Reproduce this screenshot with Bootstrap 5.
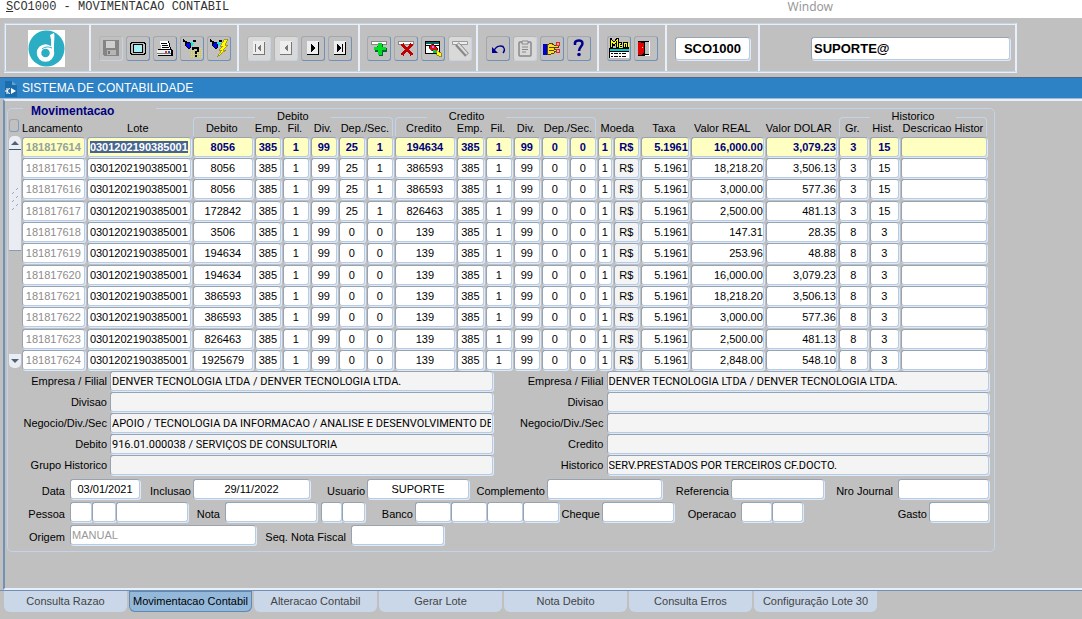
<!DOCTYPE html>
<html lang="pt-BR">
<head>
<meta charset="utf-8">
<meta name="viewport" content="width=device-width, initial-scale=1">
<title>SCO1000 - Movimentacao Contabil</title>
<link href="https://cdn.jsdelivr.net/npm/bootstrap@5.3.0/dist/css/bootstrap.min.css" rel="stylesheet">
<style>
  :root { --line: #c3d3e8; --hi: #e6effa; --navy: #000080; }
  body { background: #c0c0c0; color: #000; font: 11px/13px "Liberation Sans", Arial, sans-serif; }
  .menubar { height: 18px; background: #fff; }
  .menubar a { color: #333; text-decoration: none; }
  .menu-prog { font: 12px/14px "Liberation Mono", monospace; padding-left: 6px; }
  .menubar .menu-window { color: #999; font: 12px/14px "Noto Sans", sans-serif; margin-right: 249px; }

  .toolbar { margin: 5px 65px 0 4px; height: 49px; border: 1px solid var(--line); border-right: 2px solid var(--hi); box-shadow: inset 1px 1px 0 var(--hi), 0 1px 0 var(--hi); }
  .tool-seg { border-right: 2px solid var(--hi); display: flex; align-items: center; gap: 3px; padding-left: 8px; flex: none; padding-top: 1px; }
  .seg-logo { width: 86px; padding-left: 23px; }
  .seg-file { width: 148px; }
  .seg-nav { width: 121px; }
  .seg-rec { width: 118px; padding-left: 7px; }
  .seg-edit { width: 121px; }
  .seg-menu { width: 68px; }
  .seg-code { width: 93px; }
  .seg-user { flex: 1; border-right: 0; padding: 1px 5px 0 51px; }
  .tool-btn { width: 24px; height: 25px; padding: 0; border-radius: 3px; background: #c0c0c0; border: 1px solid #a4a8ae; border-right-color: #6f90b8; border-bottom-color: #6f90b8; display: grid; place-items: center; }
  .tool-btn:disabled { background: #d9d9d9; border-color: #b5b5b5 #c6d3e4 #c6d3e4 #b5b5b5; }
  .tool-btn.flat:disabled { background: #c0c0c0; }
  .tool-btn svg { width: 20px; height: 20px; }

  .titlebar { height: 22px; margin-top: 5px; background: #2c82c4; border-top: 1px solid #50658a; border-bottom: 1px solid #9db9d6; color: #fff; font-size: 12px; padding: 1px 0 0 4px; }
  .canvas { margin-left: 3px; border-left: 2px solid #7090b4; border-top: 2px solid var(--hi); border-bottom: 2px solid var(--hi); padding: 7px 87px 36px 2px; min-height: 490px; }
  .mov { border: 1px solid var(--line); border-radius: 5px; padding: 0 5px 6px 1px; position: relative; }
  .mov-title { position: absolute; top: -4px; left: 15px; padding: 0 42px 0 8px; background: #c0c0c0; color: var(--navy); font-weight: bold; font-size: 12px; }

  .field { width: 100%; min-width: 0; height: 20px; padding: 0 1px; background: #fff; color: #000; border: 1px solid #b7cbe4; border-top-color: #98a3b2; border-left-color: #98a3b2; border-radius: 3px; box-shadow: 1px 1px 0 #dfeaf7; font: inherit; display: block; outline: 0; }
  .field.ro { background: #f4f4f4; }
  .detail .field { font-family: Roboto, sans-serif; }
  .field.big { height: 23px; padding: 0 2px; font-size: 13px; font-weight: bold; }
  .field.faded { color: #999; }

  .rail { width: 13px; padding-top: 10px; }
  .rail-box { width: 10px; height: 13px; border: 1px solid #a0a4aa; border-right-color: #7f9dc2; border-bottom-color: #7f9dc2; border-radius: 3px; }
  .rail-btn { width: 12px; height: 14px; border: 0; padding: 0; background: #e9eef5; display: grid; place-items: center; }
  .rail-up { border-radius: 5px 5px 0 0; border-bottom: 1px solid #44546a; margin-top: 4px; }
  .rail-down { border-radius: 0 0 5px 5px; margin-bottom: 3px; }
  .rail-thumb { height: 101px; width: 12px; background: #e9edf3; border-bottom: 1px solid #8a9bb2; display: grid; place-items: center; }

  .mov-grid { table-layout: fixed; width: 100%; border-collapse: collapse; margin-top: 1px; }
  .mov-grid th, .mov-grid td { padding: 0; font-weight: normal; text-align: center; white-space: nowrap; }
  .mov-grid td { padding: 0 2px 0 0; vertical-align: top; }
  .mov-grid tbody tr { height: 21px; }
  .mov-grid tbody tr:nth-child(3n) { height: 22px; }
  .mov-grid .row-groups { height: 13px; }
  .mov-grid .row-names { height: 14px; }
  .mov-grid .row-names th { padding: 0 4px 3px 0; line-height: 11px; vertical-align: top; }
  .mov-grid .row-names th.amount { padding-right: 12px; }
  .group-head { display: flex; height: 13px; gap: 22px; margin-right: 2px; align-items: flex-start; }
  .group-head::before, .group-head::after { content: ""; flex: 1; height: 19px; margin-top: 7px; border-top: 1px solid var(--line); }
  .group-head::before { border-left: 1px solid var(--line); border-top-left-radius: 4px; }
  .group-head::after { border-right: 1px solid var(--line); border-top-right-radius: 4px; }
  .group-head.lead-in::before { flex: 0 0 32px; }
  .c-lanc { width: 65px } .c-lote { width: 106px } .c-conta { width: 62px } .c-cod { width: 28px } .c-emp { width: 29px }
  .c-moe { width: 16px } .c-sim { width: 27px } .c-taxa { width: 50px } .c-real { width: 75px } .c-dol { width: 73px } .c-hist { width: 31px }
  .mov-grid .field { text-align: center; padding: 0; }
  .mov-grid .num { text-align: right; }
  .mov-grid .dim { color: #8c8c8c; }
  .mov-grid .current .field { background: #ffffc2; color: var(--navy); font-weight: bold; }
  .mov-grid .current .dim { color: #93a39b; }
  .field::selection { background: #47648f; color: #fff; }

  .detail { display: grid; grid-template-columns: 101px 1fr 114px 1fr; grid-auto-rows: 20px; row-gap: 1px; }
  .detail label, .line label { text-align: right; padding: 4px 3px 0 0; white-space: nowrap; }
  .line { display: grid; margin-top: 3px; }
  .line label { padding: 6px 2px 0 0; }
  .line label.wide { padding-right: 5px; }
  .line-a { grid-template-columns: 61px 70px 53px 117px 57px 102px 78px 115px 69px 93px 74px 1fr; margin-top: 4px; }
  .line-b { grid-template-columns: 61px 22px 24px 72px 37px 96px 21px 23px 50px 36px 36px 36px 36px 43px 72px 67px 31px 31px 1fr 60px; }
  .line-c { grid-template-columns: 61px 186px 95px 93px; }

  .pages { border-top: 1px solid #6f8fb3; gap: 2px; padding-left: 4px; flex-wrap: nowrap; }
  .pages .nav-link { width: 123px; height: 21px; padding: 4px 0 0; text-align: center; font-size: 11px; line-height: 13px; color: #444; background: #c9d7e9; border-radius: 0 0 6px 6px; white-space: nowrap; }
  .pages .nav-link.active { background: #93b8da; color: #000; box-shadow: inset 0 0 0 1px #5f88b5; }
</style>
</head>
<body>
<nav class="menubar d-flex justify-content-between" aria-label="Menu">
  <a class="menu-prog" href="#"><u>S</u>CO1000 - MOVIMENTACAO CONTABIL</a>
  <a class="menu-window" href="#">Window</a>
</nav>

<div class="toolbar d-flex" role="toolbar" aria-label="Ferramentas">
  <div class="tool-seg seg-logo">
    <svg width="37" height="37" viewBox="0 0 37 37" role="img" aria-label="Logo"><path fill="#fff" d="M0 0h37v37H0z"/><circle cx="18.500" cy="18.500" r="18" fill="#2badc4"/><path d="M22 5l4-2c1 3 0 7 0 12v8h-4c1-6 2-12 0-18z" fill="#fff"/><circle cx="17.500" cy="23" r="6.500" fill="none" stroke="#fff" stroke-width="4.500"/><path d="M14 19c4-3 7-2 10-1" fill="none" stroke="#2badc4" stroke-width="1"/></svg>
  </div>
  <div class="tool-seg seg-file">
    <button class="tool-btn flat" disabled aria-label="Salvar"><svg viewBox="0 0 20 20" shape-rendering="crispEdges"><path fill="#858585" d="M2 2h15l1 1v15H3l-1-1z"/><path fill="#cfcfcf" d="M5 3h9v7H5z"/><path fill="#b5b5b5" d="M6 12h9v5H6z"/><path fill="#777" d="M7 13h2v3H7z"/></svg></button>
    <button class="tool-btn" aria-label="Tela"><svg viewBox="0 0 20 20" shape-rendering="crispEdges"><path fill="#000" d="M3 4h14v1h1v11h-1v1H3v-1H2V5h1z"/><path fill="#c0c0c0" d="M4 5h12v1h1v9h-1v1H4v-1H3V6h1z"/><path fill="#000" d="M5 6h10v9H5z"/><path fill="#a6eef2" d="M6 7h8v7H6z"/></svg></button>
    <button class="tool-btn" aria-label="Imprimir"><svg viewBox="0 0 20 20" shape-rendering="crispEdges"><path fill="#fff" d="M5 3h8l2 8H6z"/><path d="M6 5h6M7 7h6M7 9h7" stroke="#000"/><path fill="#000" d="M13 3h1l2 8h-1zM3 11h14l1 2v5H3z"/><path fill="#eee" d="M2 12h14v5H2z"/><path fill="#d33" d="M10 13h2v2h-2z"/><path fill="#25c" d="M13 13h2v2h-2z"/><path d="M2 15.500h14" stroke="#777"/></svg></button>
    <button class="tool-btn" aria-label="Entrar consulta"><svg viewBox="0 0 20 20" shape-rendering="crispEdges"><path fill="#00f" stroke="#000" d="M4 5l4-1 1 5-2 2-4-4z"/><path fill="#0ee" d="M8 4l4 1-2 4z"/><path d="M1 2l4 3M11 3h3" stroke="#000" stroke-width="2"/><path d="M9 12.500h11M9 14.500h11M9 16.500h11M9 18.500h11M12 10.500h8" stroke="#ee0" stroke-dasharray="1 1"/><path d="M11 12v-2h5v3l-2 1v2M14 17v2" fill="none" stroke="#000" stroke-width="2"/></svg></button>
    <button class="tool-btn" aria-label="Executar consulta"><svg viewBox="0 0 20 20" shape-rendering="crispEdges"><path fill="#00f" stroke="#000" d="M4 5l4-1 1 5-2 2-4-4z"/><path fill="#0ee" d="M8 4l4 1-3 3z"/><path d="M1 2l4 3M10 3h3" stroke="#000" stroke-width="2"/><path fill="#ff0" stroke="#997d00" stroke-width=".7" d="M19 1l-4 1-4 6h3l-4 4h3l-5 7 9-7h-3l5-5h-3z"/></svg></button>
  </div>
  <div class="tool-seg seg-nav">
    <button class="tool-btn" disabled aria-label="Primeiro"><svg viewBox="0 0 20 20" shape-rendering="crispEdges"><path fill="#eee" d="M4 3h12v14H4z"/><path fill="none" stroke="#777" d="M4 16.500h11.500V4"/><path fill="#777" d="M6 6h1v8H6zM12 6v8l-4-4z"/></svg></button>
    <button class="tool-btn" disabled aria-label="Anterior"><svg viewBox="0 0 20 20" shape-rendering="crispEdges"><path fill="#eee" d="M4 3h12v14H4z"/><path fill="none" stroke="#777" d="M4 16.500h11.500V4"/><path fill="#777" d="M12 6v8l-4-4z"/></svg></button>
    <button class="tool-btn" aria-label="Proximo"><svg viewBox="0 0 20 20" shape-rendering="crispEdges"><path fill="#eee" d="M4 3h12v14H4z"/><path fill="none" stroke="#000" d="M4 16.500h11.500V4"/><path fill="#000" d="M8 6v8l4-4z"/></svg></button>
    <button class="tool-btn" aria-label="Ultimo"><svg viewBox="0 0 20 20" shape-rendering="crispEdges"><path fill="#eee" d="M4 3h12v14H4z"/><path fill="none" stroke="#000" d="M4 16.500h11.500V4"/><path fill="#000" d="M7 6v8l4-4zM12 6h1v8h-1z"/></svg></button>
  </div>
  <div class="tool-seg seg-rec">
    <button class="tool-btn" aria-label="Inserir"><svg viewBox="0 0 20 20" shape-rendering="crispEdges"><path fill="#fff" stroke="#888" d="M2.500 3.500h15v3h-15z"/><path fill="#063" d="M10 6h4v4h4v4h-4v4h-4v-4H6v-3z"/><path fill="#0d2" d="M9 5h4v4h4v3h-4v5H9v-5H5V9h4z"/></svg></button>
    <button class="tool-btn" aria-label="Remover"><svg viewBox="0 0 20 20" shape-rendering="crispEdges"><path fill="#fff" stroke="#888" d="M2.500 3.500h15v3h-15z"/><path d="M6 6l10 11M16 6L6 17" stroke="#c00000" stroke-width="3"/></svg></button>
    <button class="tool-btn" aria-label="Limpar"><svg viewBox="0 0 20 20" shape-rendering="crispEdges"><path fill="#fff" stroke="#000" d="M2.500 3.500h14v12h-14z"/><path fill="#066" d="M3 4h13v2H3z"/><path stroke="#000" d="M3 7.500h13"/><path fill="#d11" stroke="#000" stroke-width=".6" d="M6 8l4-2 5 5-3 4-5-4z"/><path fill="#0c4" d="M10 12h3v3h-3z"/><path fill="#ff0" stroke="#550" stroke-width=".6" d="M13 12l5 3v4l-4-2z"/><path fill="#f6f" d="M9 8h2v2H9z"/></svg></button>
    <button class="tool-btn" disabled aria-label="Editar registro"><svg viewBox="0 0 20 20"><path fill="#eee" stroke="#999" d="M2.500 3.500h15v3h-15z"/><path d="M7 6l10 11" stroke="#888" stroke-width="5"/><path d="M8 6l9 10" stroke="#ddd" stroke-width="2"/></svg></button>
  </div>
  <div class="tool-seg seg-edit">
    <button class="tool-btn" aria-label="Desfazer"><svg viewBox="0 0 20 20"><path d="M6 13C8 7 15 7 16 10c1 2 0 4-1 5" fill="none" stroke="#000090" stroke-width="1.300"/><path d="M4 9v6h6z" fill="#000090"/></svg></button>
    <button class="tool-btn" disabled aria-label="Colar"><svg viewBox="0 0 20 20"><rect x="4" y="4" width="12" height="14" rx="1" fill="none" stroke="#888" stroke-width="1.500"/><path d="M7 3h6v3H7zM7 9h6M7 11.500h6M7 14h4" fill="#ddd" stroke="#888"/></svg></button>
    <button class="tool-btn" aria-label="Selecionar"><svg viewBox="0 0 20 20" shape-rendering="crispEdges"><path fill="#00c" d="M1 6h4v11H1z"/><path fill="#fd2" stroke="#540" d="M5 7l4-2 3 2h4v2h-4v2h2v2h-2v2l-3 1H5z"/><path d="M7 9h5M7 12h5" stroke="#540"/><circle cx="16" cy="6" r="2" fill="none" stroke="#e22"/><circle cx="16" cy="13" r="2" fill="none" stroke="#e22"/></svg></button>
    <button class="tool-btn" aria-label="Ajuda"><svg viewBox="0 0 20 20"><path d="M6 7V4.500C7 2 13 1.500 13.500 5c.5 3-3.500 4-3.500 8" fill="none" stroke="#000090" stroke-width="2.500"/><circle cx="10" cy="16.500" r="1.800" fill="#000090"/></svg></button>
  </div>
  <div class="tool-seg seg-menu">
    <button class="tool-btn" aria-label="Menu"><svg viewBox="0 0 20 20" shape-rendering="crispEdges"><path d="M2 10V2l3 4 3-4v8M13 5H9v4h4M9 7h4M15 10V5h2v5M18 5v4h2V5" fill="none" stroke="#000" stroke-width="3"/><path d="M2 9V2l3 4 3-4v7M12 5H10v4h3M10 7h3M15 9V5h2v4M19 5v4" fill="none" stroke="#ff0" stroke-width="1"/><path fill="#000" d="M0 10h20v10H0z"/><path fill="#0cc" d="M1 11h19v2H1z"/><path fill="#fff" d="M1 14h19v6H1z"/><path d="M2 15.500h16M2 18.500h16" stroke="#000" stroke-dasharray="2 1 4 1"/></svg></button>
    <button class="tool-btn" aria-label="Sair"><svg viewBox="0 0 20 20" shape-rendering="crispEdges"><path fill="#c0c0c0" stroke="#000" d="M3.500 3.500h10v13h-10z"/><path fill="#fff" d="M13 3h1v15h-1zM8 17h6v1H8z"/><path fill="#000" d="M2 3h7v15H2z"/><path fill="#e00000" d="M2 4l6 1v10l-3 2H2z"/><path fill="#ff0" d="M6 9h1v1H6z"/></svg></button>
  </div>
  <div class="tool-seg seg-code"><input class="field big text-center me-2" aria-label="Programa" value="SCO1000"></div>
  <div class="tool-seg seg-user"><input class="field big" aria-label="Usuario conectado" value="SUPORTE@"></div>
</div>

<header class="titlebar d-flex align-items-center">
  <svg width="14" height="16" viewBox="0 0 14 16" class="me-1" aria-hidden="true"><path fill="#1c6cab" d="M1 0h7l5 4v12H1z"/><path fill="#58a3da" d="M8 0v4h5z"/><path d="M6 7.500a2.500 2.500 0 1 0 0 5M3 7v6M1 10h3" fill="none" stroke="#fff"/><path fill="#fff" d="M7 7l5 3-5 3z"/></svg>
  <span>SISTEMA DE CONTABILIDADE</span>
</header>

<main class="canvas">
  <section class="mov" aria-labelledby="movTitle">
    <div class="mov-title" id="movTitle">Movimentacao</div>
    <div class="d-flex">
      <div class="rail d-flex flex-column">
        <div class="rail-box"></div>
        <button class="rail-btn rail-up" aria-label="Rolar para cima"><svg width="8" height="4"><path fill="#555f70" d="M0 4l4-4 4 4z"/></svg></button>
        <div class="rail-thumb"><svg width="8" height="26" viewBox="0 0 8 26"><path stroke="#98a8bc" d="M5 3l2-2M1 7l2-2M5 11l2-2M1 15l2-2M5 19l2-2M1 23l2-2"/></svg></div>
        <button class="rail-btn rail-down mt-auto" aria-label="Rolar para baixo"><svg width="8" height="4"><path fill="#555f70" d="M0 0h8L4 4z"/></svg></button>
      </div>
      <table class="mov-grid">
        <colgroup>
          <col class="c-lanc"><col class="c-lote"><col class="c-conta"><col class="c-cod"><col class="c-cod"><col class="c-cod"><col class="c-cod"><col class="c-cod">
          <col class="c-conta"><col class="c-emp"><col class="c-cod"><col class="c-cod"><col class="c-cod"><col class="c-cod">
          <col class="c-moe"><col class="c-sim"><col class="c-taxa"><col class="c-real"><col class="c-dol"><col class="c-hist"><col class="c-hist"><col>
        </colgroup>
        <thead>
          <tr class="row-groups">
            <th colspan="2"></th>
            <th colspan="6"><div class="group-head">Debito</div></th>
            <th colspan="6"><div class="group-head lead-in">Credito</div></th>
            <th colspan="5"></th>
            <th colspan="3"><div class="group-head">Historico</div></th>
          </tr>
          <tr class="row-names">
            <th>Lancamento</th><th>Lote</th>
            <th>Debito</th><th>Emp.</th><th>Fil.</th><th>Div.</th><th colspan="2">Dep./Sec.</th>
            <th>Credito</th><th>Emp.</th><th>Fil.</th><th>Div.</th><th colspan="2">Dep./Sec.</th>
            <th colspan="2">Moeda</th><th>Taxa</th><th class="amount">Valor REAL</th><th class="amount">Valor DOLAR</th>
            <th>Gr.</th><th>Hist.</th><th>Descricao Histor</th>
          </tr>
        </thead>
        <tbody id="rows"></tbody>
      </table>
    </div>

    <div class="detail">
      <label for="d1">Empresa / Filial</label><input id="d1" class="field ro" readonly value="DENVER TECNOLOGIA LTDA / DENVER TECNOLOGIA LTDA.">
      <label for="c1">Empresa / Filial</label><input id="c1" class="field ro" readonly value="DENVER TECNOLOGIA LTDA / DENVER TECNOLOGIA LTDA.">
      <label for="d2">Divisao</label><input id="d2" class="field ro" readonly>
      <label for="c2">Divisao</label><input id="c2" class="field ro" readonly>
      <label for="d3">Negocio/Div./Sec</label><input id="d3" class="field ro" readonly value="APOIO / TECNOLOGIA DA INFORMACAO / ANALISE E DESENVOLVIMENTO DE">
      <label for="c3">Negocio/Div./Sec</label><input id="c3" class="field ro" readonly>
      <label for="d4">Debito</label><input id="d4" class="field ro" readonly value="916.01.000038 / SERVIÇOS DE CONSULTORIA">
      <label for="c4">Credito</label><input id="c4" class="field ro" readonly>
      <label for="d5">Grupo Historico</label><input id="d5" class="field ro" readonly>
      <label for="c5">Historico</label><input id="c5" class="field ro" readonly value="SERV.PRESTADOS POR TERCEIROS CF.DOCTO.">
    </div>

    <div class="line line-a">
      <label for="fData" class="wide">Data</label><input id="fData" class="field text-center" value="03/01/2021">
      <label for="fInc">Inclusao</label><input id="fInc" class="field text-center" value="29/11/2022">
      <label for="fUsu">Usuario</label><input id="fUsu" class="field text-center" value="SUPORTE">
      <label for="fComp">Complemento</label><input id="fComp" class="field">
      <label for="fRef">Referencia</label><input id="fRef" class="field">
      <label for="fJou" class="wide">Nro Journal</label><input id="fJou" class="field">
    </div>
    <div class="line line-b">
      <label for="fPes" class="wide">Pessoa</label><input id="fPes" class="field"><input class="field" aria-label="Pessoa codigo"><input class="field" aria-label="Pessoa numero">
      <label for="fNota" class="wide">Nota</label><div class="me-1"><input id="fNota" class="field"></div><input class="field" aria-label="Nota serie"><input class="field" aria-label="Nota tipo">
      <label for="fBan">Banco</label><input id="fBan" class="field"><input class="field" aria-label="Agencia"><input class="field" aria-label="Conta"><input class="field" aria-label="Digito">
      <label for="fChe">Cheque</label><input id="fChe" class="field">
      <label for="fOpe" class="wide">Operacao</label><input id="fOpe" class="field"><input class="field" aria-label="Operacao complemento">
      <label for="fGas">Gasto</label><input id="fGas" class="field">
    </div>
    <div class="line line-c">
      <label for="fOri" class="wide">Origem</label><input id="fOri" class="field faded" value="MANUAL">
      <label for="fSeq" class="wide">Seq. Nota Fiscal</label><input id="fSeq" class="field">
    </div>
  </section>
</main>

<nav class="nav pages" aria-label="Paginas">
  <a class="nav-link" href="#">Consulta Razao</a>
  <a class="nav-link active" aria-current="page" href="#">Movimentacao Contabil</a>
  <a class="nav-link" href="#">Alteracao Contabil</a>
  <a class="nav-link" href="#">Gerar Lote</a>
  <a class="nav-link" href="#">Nota Debito</a>
  <a class="nav-link" href="#">Consulta Erros</a>
  <a class="nav-link" href="#">Configuração Lote 30</a>
</nav>

<script src="https://cdn.jsdelivr.net/npm/bootstrap@5.3.0/dist/js/bootstrap.bundle.min.js"></script>
<script>
  // lancamento, debito, dep, sec, credito, valor real, valor dolar, grupo, historico
  const entries = [
    [181817614, 8056, 25, 1, 194634, "16,000.00", "3,079.23", 3, 15],
    [181817615, 8056, 25, 1, 386593, "18,218.20", "3,506.13", 3, 15],
    [181817616, 8056, 25, 1, 386593, "3,000.00", "577.36", 3, 15],
    [181817617, 172842, 25, 1, 826463, "2,500.00", "481.13", 3, 15],
    [181817618, 3506, 0, 0, 139, "147.31", "28.35", 8, 3],
    [181817619, 194634, 0, 0, 139, "253.96", "48.88", 8, 3],
    [181817620, 194634, 0, 0, 139, "16,000.00", "3,079.23", 8, 3],
    [181817621, 386593, 0, 0, 139, "18,218.20", "3,506.13", 8, 3],
    [181817622, 386593, 0, 0, 139, "3,000.00", "577.36", 8, 3],
    [181817623, 826463, 0, 0, 139, "2,500.00", "481.13", 8, 3],
    [181817624, 1925679, 0, 0, 139, "2,848.00", "548.10", 8, 3]
  ];
  const names = ["Lancamento", "Lote", "Debito", "Emp.", "Fil.", "Div.", "Dep.", "Sec.", "Credito", "Emp.", "Fil.", "Div.", "Dep.", "Sec.",
    "Moeda", "Simbolo", "Taxa", "Valor REAL", "Valor DOLAR", "Gr.", "Hist.", "Descricao"];
  const look = { 0: "dim", 15: "ro", 16: "num", 17: "num", 18: "num" };
  document.getElementById("rows").innerHTML = entries.map(([lan, deb, dep, sec, cre, real, dol, gr, hist], r) => {
    const cells = [lan, "0301202190385001", deb, 385, 1, 99, dep, sec, cre, 385, 1, 99, 0, 0, 1, "R$", "5.1961", real, dol, gr, hist, ""];
    return `<tr class="${r ? "" : "current"}">` + cells.map((v, c) =>
      `<td><input class="field ${look[c] || ""}" aria-label="${names[c]}" value="${v}"></td>`).join("") + "</tr>";
  }).join("");
  document.querySelector(".current td:nth-child(2) input").select();
</script>
</body>
</html>
